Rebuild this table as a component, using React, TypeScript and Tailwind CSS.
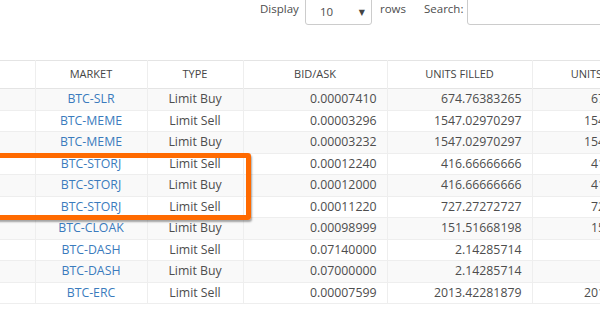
import React from "react";

interface Order {
  market: string;
  type: "Limit Buy" | "Limit Sell";
  bidAsk: string;
  filled: string;
  total: string;
}

const orders: Order[] = [
  { market: "BTC-SLR", type: "Limit Buy", bidAsk: "0.00007410", filled: "674.76383265", total: "674.76383265" },
  { market: "BTC-MEME", type: "Limit Sell", bidAsk: "0.00003296", filled: "1547.02970297", total: "1547.02970297" },
  { market: "BTC-MEME", type: "Limit Buy", bidAsk: "0.00003232", filled: "1547.02970297", total: "1547.02970297" },
  { market: "BTC-STORJ", type: "Limit Sell", bidAsk: "0.00012240", filled: "416.66666666", total: "416.66666666" },
  { market: "BTC-STORJ", type: "Limit Buy", bidAsk: "0.00012000", filled: "416.66666666", total: "416.66666666" },
  { market: "BTC-STORJ", type: "Limit Sell", bidAsk: "0.00011220", filled: "727.27272727", total: "727.27272727" },
  { market: "BTC-CLOAK", type: "Limit Buy", bidAsk: "0.00098999", filled: "151.51668198", total: "151.51668198" },
  { market: "BTC-DASH", type: "Limit Sell", bidAsk: "0.07140000", filled: "2.14285714", total: "2.14285714" },
  { market: "BTC-DASH", type: "Limit Buy", bidAsk: "0.07000000", filled: "2.14285714", total: "2.14285714" },
  { market: "BTC-ERC", type: "Limit Sell", bidAsk: "0.00007599", filled: "2013.42281879", total: "2013.42281879" },
];

export default function App() {
  return (
    <div
      className="relative h-[315px] w-[600px] overflow-hidden bg-white text-[11.5px] text-[#4d4d4d]"
      style={{ fontFamily: '"Open Sans", "DejaVu Sans", sans-serif' }}
    >
      {/* datatable controls */}
      <div className="-mt-[4px] flex items-center pl-[260px]">
        <span className="mb-[3px] w-[45px] shrink-0">Display</span>
        <div className="flex h-[29px] w-[67px] shrink-0 items-center justify-between rounded-[3px] border border-[#ccc] pl-[14px] pr-[6px] pt-[3px]">
          <span>10</span>
          <span className="text-[8px] text-[#444]">▼</span>
        </div>
        <span className="mb-[3px] ml-[8px] w-[44px] shrink-0">rows</span>
        <span className="mb-[3px] w-[43px] shrink-0">Search:</span>
        <div className="h-[28px] w-[160px] shrink-0 rounded-[3px] border border-[#ccc]" />
      </div>

      {/* orders table */}
      <table className="mt-[35px] w-[677px] table-fixed border-collapse text-[12.3px]">
        <colgroup>
          <col className="w-[35px]" />
          <col className="w-[112px]" />
          <col className="w-[96px]" />
          <col className="w-[144px]" />
          <col className="w-[145px]" />
          <col className="w-[145px]" />
        </colgroup>
        <thead>
          <tr className="h-[28px] border-y border-[#e4e4e4] text-[11px] text-[#444]">
            <th className="border-r border-[#eee]" />
            <th className="border-r border-[#eee] font-normal">MARKET</th>
            <th className="border-r border-[#eee] font-normal">TYPE</th>
            <th className="border-r border-[#eee] font-normal">BID/ASK</th>
            <th className="border-r border-[#eee] font-normal">UNITS FILLED</th>
            <th className="border-r border-[#eee] font-normal">UNITS TOTAL</th>
          </tr>
        </thead>
        <tbody>
          {orders.map((o, i) => (
            <tr
              key={i}
              className={`h-[21.5px] border-b border-[#eee] ${i % 2 === 0 ? "bg-[#f9f9f9]" : "bg-white"}`}
            >
              <td className="border-r border-[#eee]" />
              <td className="border-r border-[#eee] text-center text-[#3a7bbd]">{o.market}</td>
              <td className="border-r border-[#eee] text-center">{o.type}</td>
              <td className="border-r border-[#eee] pr-[10px] text-right">{o.bidAsk}</td>
              <td className="border-r border-[#eee] pr-[10px] text-right">{o.filled}</td>
              <td className="border-r border-[#eee] pr-[5px] text-right">{o.total}</td>
            </tr>
          ))}
        </tbody>
      </table>

      {/* highlight annotation */}
      <div className="absolute left-[-20px] top-[153px] h-[67px] w-[271px] rounded-[3px] border-[5px] border-[#ff6a00] shadow-[1px_2px_2px_rgba(0,0,0,0.35)]" />
    </div>
  );
}
